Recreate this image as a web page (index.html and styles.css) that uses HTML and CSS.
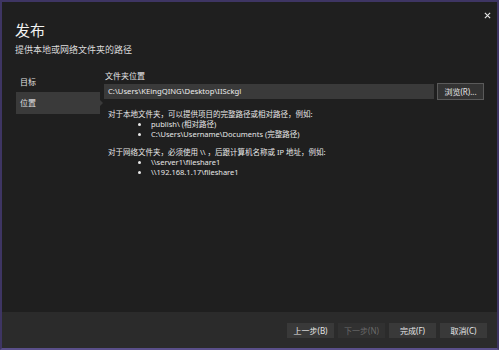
FILE: index.html
```html
<!DOCTYPE html>
<html lang="zh-CN">
<head>
  <meta charset="UTF-8">
  <title>发布</title>
  <link rel="stylesheet" href="styles.css">
</head>
<body>
  <div class="window">
    <div class="header">
      <div>
        <h1>发布</h1>
        <p class="subtitle">提供本地或网络文件夹的路径</p>
      </div>
      <button class="close" aria-label="关闭">
        <svg width="7" height="7" viewBox="0 0 8 8"><path d="M1 1L7 7M7 1L1 7" stroke="#e6e6e6" stroke-width="1.3"/></svg>
      </button>
    </div>

    <div class="body">
      <ul class="nav">
        <li>目标</li>
        <li class="selected">位置</li>
      </ul>

      <div class="content">
        <label class="field-label">文件夹位置</label>
        <div class="field-row">
          <div class="input">C:\Users\KEingQING\Desktop\IISckgl</div>
          <button class="btn browse">浏览(R)...</button>
        </div>

        <div class="help">
          <p>对于本地文件夹，可以提供项目的完整路径或相对路径，例如:</p>
          <ul>
            <li>publish\ (相对路径)</li>
            <li>C:\Users\Username\Documents (完整路径)</li>
          </ul>
          <p>对于网络文件夹，必须使用 \\ ，后跟计算机名称或 IP 地址，例如:</p>
          <ul>
            <li>\\server1\fileshare1</li>
            <li>\\192.168.1.17\fileshare1</li>
          </ul>
        </div>
      </div>
    </div>

    <div class="footer">
      <button class="btn">上一步(B)</button>
      <button class="btn" disabled>下一步(N)</button>
      <button class="btn">完成(F)</button>
      <button class="btn">取消(C)</button>
    </div>
  </div>
</body>
</html>
```

FILE: styles.css
```css
* {
  box-sizing: border-box;
}
body {
  margin: 0;
  font-family: "Noto Sans", "Noto Sans CJK SC", sans-serif;
  background-color: #1f1f1f;
  color: #e8e8e8;
}
.window {
  width: 499px;
  height: 350px;
  border: 2px solid #3e3563;
  border-bottom-color: #5a4f8a;
  background-color: #1f1f1f;
  display: flex;
  flex-direction: column;
}
.header {
  display: flex;
  justify-content: space-between;
  align-items: flex-start;
  padding: 18px 5px 0 13px;
}
h1 {
  font-size: 15px;
  font-weight: normal;
  line-height: 20px;
  margin: 0;
  color: #f2f2f2;
}
.subtitle {
  font-size: 9px;
  line-height: 12px;
  margin: 4px 0 0;
  color: #dcdcdc;
}
.close {
  background: none;
  border: none;
  padding: 0;
  margin-top: -10px;
  width: 10px;
  height: 10px;
  display: flex;
  align-items: center;
  justify-content: center;
}
.body {
  flex: 1;
  display: flex;
  padding-top: 15px;
}
.nav {
  list-style: none;
  margin: 0;
  padding: 0 0 0 14px;
  width: 102px;
  font-size: 8px;
}
.nav li {
  height: 21px;
  line-height: 21px;
  padding-left: 4px;
  width: 84px;
  color: #e0e0e0;
  position: relative;
}
.nav .selected {
  background-color: #3a3a3a;
  height: 22px;
  line-height: 22px;
}
.nav .selected::after {
  content: "";
  position: absolute;
  right: -3px;
  top: 8px;
  border-top: 3px solid transparent;
  border-bottom: 3px solid transparent;
  border-left: 3px solid #3a3a3a;
}
.content {
  flex: 1;
  padding-right: 13px;
  font-size: 8px;
}
.field-label {
  display: block;
  line-height: 10px;
  padding-left: 1px;
}
.field-row {
  display: flex;
  gap: 3px;
  margin-top: 2px;
}
.input {
  flex: 1;
  height: 15px;
  line-height: 15px;
  margin-top: 1px;
  background-color: #3a3a3a;
  padding-left: 4px;
  color: #ececec;
  font-size: 7.7px;
}
.btn {
  font-family: inherit;
  font-size: 8px;
  color: #e6e6e6;
  background-color: #333333;
  border: 1px solid #3c3c3c;
  height: 15px;
  width: 47px;
  padding: 0;
}
.browse {
  height: 17px;
  border-color: #5a5a5a;
}
.help {
  padding-left: 4px;
  margin-top: 9px;
  line-height: 10px;
  font-size: 7.5px;
}
.help p {
  margin: 0;
}
.help ul {
  margin: 0 0 8px;
  padding-left: 43px;
  list-style: disc;
}
.help li::marker {
  font-size: 9px;
}
.footer {
  height: 36px;
  background-color: #2b2b2b;
  display: flex;
  justify-content: flex-end;
  align-items: center;
  gap: 4px;
  padding-right: 10px;
}
.footer .btn {
  background-color: #393939;
  border-color: #393939;
}
.footer .btn:disabled {
  background-color: #313131;
  border-color: #313131;
  color: #6a6a6a;
}
```
